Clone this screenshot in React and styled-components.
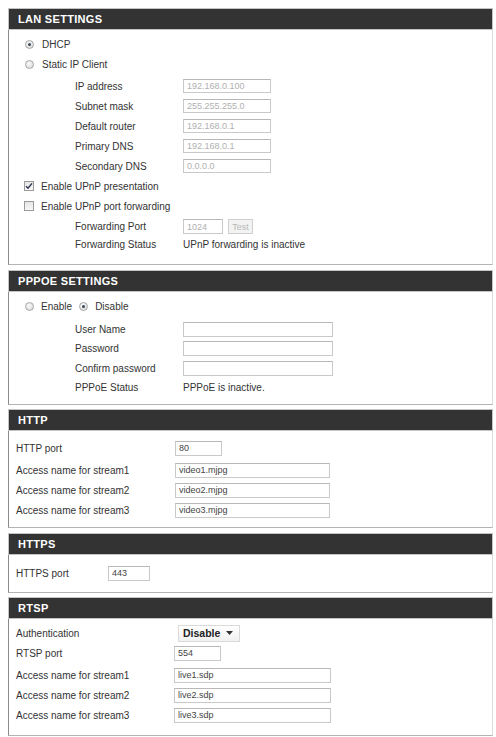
import React from 'react';
import styled, { createGlobalStyle } from 'styled-components';

const Global = createGlobalStyle`
  html, body { margin: 0; padding: 0; background: #fff; }
  body {
    font-family: "Liberation Sans", Arial, sans-serif;
    font-size: 10px;
    color: #333;
  }
  * { box-sizing: border-box; }
`;

const Page = styled.div`
  width: 485px;
  margin: 8px 0 0 8px;
  display: flex;
  flex-direction: column;
`;

const Panel = styled.section`
  margin-bottom: ${p => p.$gap || 4}px;
`;

const Header = styled.div`
  height: 22px;
  border: 1px solid #c4c4c4;
  background: #333;
  color: #fff;
  font-family: "Liberation Sans", Arial, sans-serif;
  font-weight: bold;
  font-size: 11px;
  letter-spacing: 0.3px;
  text-transform: uppercase;
  padding-left: 9px;
  display: flex;
  align-items: center;
`;

const Body = styled.div`
  border-left: 1px solid #8c8c8c;
  border-right: 1px solid #dcdcdc;
  border-bottom: 1px solid #b4b4b4;
  padding: ${p => p.$pt}px 0 ${p => p.$pb}px 7px;
`;

const Row = styled.div`
  display: flex;
  align-items: center;
  height: ${p => p.$h || 20}px;
  margin-top: ${p => p.$mt || 0}px;
  padding-left: ${p => p.$indent || 0}px;
  white-space: nowrap;
`;

const Label = styled.span`
  width: ${p => p.$w}px;
  flex: none;
`;

const TextInput = styled.input`
  width: ${p => p.$w}px;
  height: ${p => p.$h || 15}px;
  border: 1px solid #c9c9c9;
  border-top-color: #b8b8b8;
  background: #fff;
  padding: 0 3px;
  font-family: "Liberation Sans", Arial, sans-serif;
  font-size: 9px;
  color: ${p => (p.$dim ? '#b0b0b0' : '#444')};
  outline: none;
`;

const Radio = styled.span`
  width: 9px;
  height: 9px;
  flex: none;
  border-radius: 50%;
  border: 1px solid #a6a6a6;
  background: radial-gradient(circle at 40% 35%, #fafafa, #d6d6d6);
  margin-right: ${p => p.$mr || 8}px;
  position: relative;
  &::after {
    content: '';
    display: ${p => (p.$on ? 'block' : 'none')};
    position: absolute;
    left: 2px;
    top: 2px;
    width: 3px;
    height: 3px;
    border-radius: 50%;
    background: #3c4658;
  }
`;

const Check = styled.span`
  width: 10px;
  height: 10px;
  flex: none;
  border: 1px solid #9a9a9a;
  background: linear-gradient(#e6e6e6, #f8f8f8);
  margin-right: 7px;
  display: flex;
  align-items: center;
  justify-content: center;
`;

const Spacer = styled.span`
  width: ${p => p.$w}px;
  flex: none;
`;

const TestButton = styled.button`
  width: 25px;
  height: 15px;
  margin-left: 5px;
  padding: 0;
  border: 1px solid #cfcfcf;
  background: #f3f3f3;
  color: #b8b8b8;
  font-family: "Liberation Sans", Arial, sans-serif;
  font-size: 9px;
`;

const Select = styled.div`
  width: 62px;
  height: 17px;
  border: 1px solid #dadada;
  background: linear-gradient(#fff, #f1f1f1);
  display: flex;
  align-items: center;
  padding-left: 4px;
  gap: 6px;
  font-weight: bold;
  font-size: 10.5px;
  color: #222;
`;

const Radios = ({ on, label, mr }) => (
  <>
    <Radio $on={on} $mr={7} />
    <span style={mr ? { marginRight: mr } : undefined}>{label}</span>
  </>
);

const Tick = () => (
  <svg width="8" height="8" viewBox="0 0 8 8">
    <path d="M1 4.2 L3 6.3 L7 1.4" fill="none" stroke="#2b3550" strokeWidth="1.4" />
  </svg>
);

const Field = ({ label, value, w, lw = 108, indent = 59, dim, h, ih, mt }) => (
  <Row $indent={indent} $h={h} $mt={mt}>
    <Label $w={lw}>{label}</Label>
    <TextInput $w={w} $dim={dim} $h={ih} readOnly value={value} />
  </Row>
);

export default function App() {
  return (
    <>
      <Global />
      <Page>
        <Panel $gap={5}>
          <Header>LAN Settings</Header>
          <Body $pt={4} $pb={12}>
            <Row $indent={9}>
              <Radio $on />
              <span>DHCP</span>
            </Row>
            <Row $indent={9}>
              <Radio />
              <span>Static IP Client</span>
            </Row>
            <Field mt={2} label="IP address" value="192.168.0.100" w={88} dim ih={14} />
            <Field label="Subnet mask" value="255.255.255.0" w={88} dim ih={14} />
            <Field label="Default router" value="192.168.0.1" w={88} dim ih={14} />
            <Field label="Primary DNS" value="192.168.0.1" w={88} dim ih={14} />
            <Field label="Secondary DNS" value="0.0.0.0" w={88} dim ih={14} />
            <Row $indent={8}>
              <Check><Tick /></Check>
              <span>Enable UPnP presentation</span>
            </Row>
            <Row $indent={8}>
              <Check />
              <span>Enable UPnP port forwarding</span>
            </Row>
            <Row $indent={59} $h={19} $mt={1}>
              <Label $w={108}>Forwarding Port</Label>
              <TextInput $w={40} $dim readOnly value="1024" />
              <TestButton disabled>Test</TestButton>
            </Row>
            <Row $indent={59} $h={16}>
              <Label $w={108}>Forwarding Status</Label>
              <span>UPnP forwarding is inactive</span>
            </Row>
          </Body>
        </Panel>

        <Panel $gap={4}>
          <Header>PPPoE Settings</Header>
          <Body $pt={4} $pb={8}>
            <Row $indent={9}>
              <Radios label="Enable" mr={7} />
              <Radios on label="Disable" />
            </Row>
            <Field mt={4} h={19} label="User Name" value="" w={150} />
            <Field h={19} label="Password" value="" w={150} />
            <Field h={20} label="Confirm password" value="" w={150} />
            <Row $indent={59} $h={18}>
              <Label $w={108}>PPPoE Status</Label>
              <span>PPPoE is inactive.</span>
            </Row>
          </Body>
        </Panel>

        <Panel $gap={5}>
          <Header>HTTP</Header>
          <Body $pt={7} $pb={7}>
            <Field indent={0} lw={159} label="HTTP port" value="80" w={47} />
            <Field mt={2} indent={0} lw={159} label="Access name for stream1" value="video1.mjpg" w={155} />
            <Field indent={0} lw={159} label="Access name for stream2" value="video2.mjpg" w={155} />
            <Field indent={0} lw={159} label="Access name for stream3" value="video3.mjpg" w={155} />
          </Body>
        </Panel>

        <Panel $gap={4}>
          <Header>HTTPS</Header>
          <Body $pt={8} $pb={9}>
            <Field indent={0} lw={92} label="HTTPS port" value="443" w={42} />
          </Body>
        </Panel>

        <Panel $gap={0}>
          <Header>RTSP</Header>
          <Body $pt={4} $pb={10}>
            <Row>
              <Label $w={162}>Authentication</Label>
              <Select>
                <span>Disable</span>
                <svg width="7" height="4" viewBox="0 0 7 4">
                  <path d="M0 0 H7 L3.5 4 Z" fill="#333" />
                </svg>
              </Select>
            </Row>
            <Field indent={0} lw={158} label="RTSP port" value="554" w={47} />
            <Field mt={2} indent={0} lw={158} label="Access name for stream1" value="live1.sdp" w={157} />
            <Field indent={0} lw={158} label="Access name for stream2" value="live2.sdp" w={157} />
            <Field indent={0} lw={158} label="Access name for stream3" value="live3.sdp" w={157} />
          </Body>
        </Panel>
      </Page>
    </>
  );
}
